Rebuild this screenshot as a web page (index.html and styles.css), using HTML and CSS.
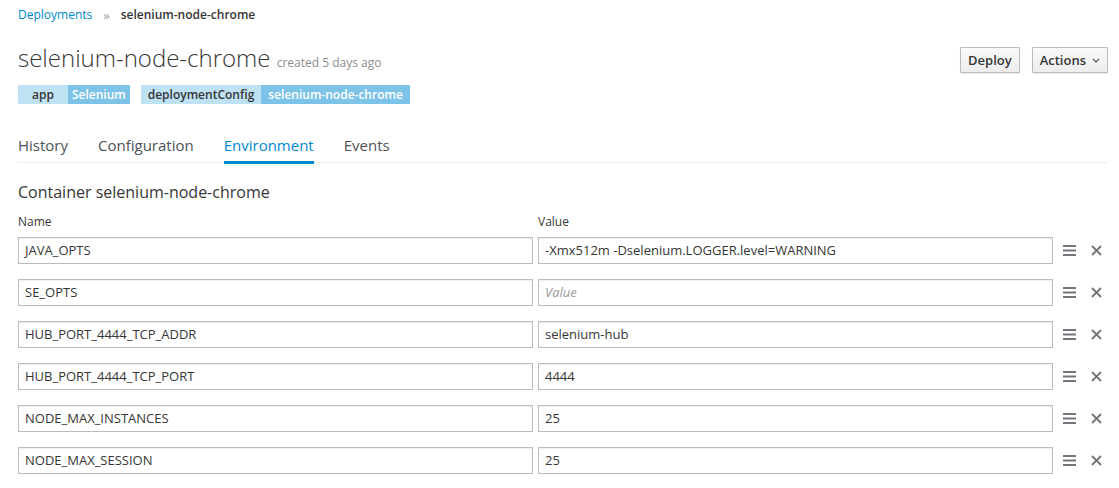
FILE: index.html
```html
<!DOCTYPE html>
<html>
<head>
<meta charset="utf-8">
<link rel="stylesheet" href="styles.css">
</head>
<body>
<div class="page">
  <div class="breadcrumb">
    <a class="crumb-link">Deployments</a>
    <span class="crumb-sep">»</span>
    <span class="crumb-current">selenium-node-chrome</span>
  </div>
  <div class="header">
    <div class="header-main">
      <h1 class="title">selenium-node-chrome <small class="created">created 5 days ago</small></h1>
      <div class="labels">
        <span class="label label-app"><span class="lkey">app</span><span class="lval">Selenium</span></span>
        <span class="label label-dc"><span class="lkey">deploymentConfig</span><span class="lval">selenium-node-chrome</span></span>
      </div>
    </div>
    <div class="actions">
      <button class="btn">Deploy</button>
      <button class="btn">Actions <svg class="caret" width="8" height="5" viewBox="0 0 8 5"><path d="M1 1 L4 4 L7 1" fill="none" stroke="#4d5258" stroke-width="1.1"/></svg></button>
    </div>
  </div>
  <div class="tabs">
    <span class="tab">History</span>
    <span class="tab">Configuration</span>
    <span class="tab active">Environment</span>
    <span class="tab">Events</span>
  </div>
  <h3 class="container-title">Container selenium-node-chrome</h3>
  <div class="env">
    <div class="env-head">
      <span class="col">Name</span>
      <span class="col">Value</span>
      <span class="icons-spacer"></span>
    </div>
    <div class="env-row">
      <div class="field">JAVA_OPTS</div>
      <div class="field">-Xmx512m -Dselenium.LOGGER.level=WARNING</div>
      <div class="row-icons">
        <svg class="ham" width="13" height="11" viewBox="0 0 13 11"><rect y="0" width="13" height="2" fill="#72767b"/><rect y="4.5" width="13" height="2" fill="#72767b"/><rect y="9" width="13" height="2" fill="#72767b"/></svg>
        <svg class="x" width="11" height="11" viewBox="0 0 11 11"><path d="M1 1 L10 10 M10 1 L1 10" stroke="#72767b" stroke-width="1.8"/></svg>
      </div>
    </div>
    <div class="env-row">
      <div class="field">SE_OPTS</div>
      <div class="field placeholder">Value</div>
      <div class="row-icons">
        <svg class="ham" width="13" height="11" viewBox="0 0 13 11"><rect y="0" width="13" height="2" fill="#72767b"/><rect y="4.5" width="13" height="2" fill="#72767b"/><rect y="9" width="13" height="2" fill="#72767b"/></svg>
        <svg class="x" width="11" height="11" viewBox="0 0 11 11"><path d="M1 1 L10 10 M10 1 L1 10" stroke="#72767b" stroke-width="1.8"/></svg>
      </div>
    </div>
    <div class="env-row">
      <div class="field">HUB_PORT_4444_TCP_ADDR</div>
      <div class="field">selenium-hub</div>
      <div class="row-icons">
        <svg class="ham" width="13" height="11" viewBox="0 0 13 11"><rect y="0" width="13" height="2" fill="#72767b"/><rect y="4.5" width="13" height="2" fill="#72767b"/><rect y="9" width="13" height="2" fill="#72767b"/></svg>
        <svg class="x" width="11" height="11" viewBox="0 0 11 11"><path d="M1 1 L10 10 M10 1 L1 10" stroke="#72767b" stroke-width="1.8"/></svg>
      </div>
    </div>
    <div class="env-row">
      <div class="field">HUB_PORT_4444_TCP_PORT</div>
      <div class="field">4444</div>
      <div class="row-icons">
        <svg class="ham" width="13" height="11" viewBox="0 0 13 11"><rect y="0" width="13" height="2" fill="#72767b"/><rect y="4.5" width="13" height="2" fill="#72767b"/><rect y="9" width="13" height="2" fill="#72767b"/></svg>
        <svg class="x" width="11" height="11" viewBox="0 0 11 11"><path d="M1 1 L10 10 M10 1 L1 10" stroke="#72767b" stroke-width="1.8"/></svg>
      </div>
    </div>
    <div class="env-row">
      <div class="field">NODE_MAX_INSTANCES</div>
      <div class="field">25</div>
      <div class="row-icons">
        <svg class="ham" width="13" height="11" viewBox="0 0 13 11"><rect y="0" width="13" height="2" fill="#72767b"/><rect y="4.5" width="13" height="2" fill="#72767b"/><rect y="9" width="13" height="2" fill="#72767b"/></svg>
        <svg class="x" width="11" height="11" viewBox="0 0 11 11"><path d="M1 1 L10 10 M10 1 L1 10" stroke="#72767b" stroke-width="1.8"/></svg>
      </div>
    </div>
    <div class="env-row">
      <div class="field">NODE_MAX_SESSION</div>
      <div class="field">25</div>
      <div class="row-icons">
        <svg class="ham" width="13" height="11" viewBox="0 0 13 11"><rect y="0" width="13" height="2" fill="#72767b"/><rect y="4.5" width="13" height="2" fill="#72767b"/><rect y="9" width="13" height="2" fill="#72767b"/></svg>
        <svg class="x" width="11" height="11" viewBox="0 0 11 11"><path d="M1 1 L10 10 M10 1 L1 10" stroke="#72767b" stroke-width="1.8"/></svg>
      </div>
    </div>
  </div>
</div>
</body>
</html>
```
FILE: styles.css
```css
* { box-sizing: border-box; }
html, body { margin: 0; padding: 0; background: #fff; }
body {
  font-family: "Open Sans", "Noto Sans", sans-serif;
  font-size: 12px;
  color: #363636;
}
.page { padding: 0 11px 0 18px; }
.breadcrumb {
  height: 28px;
  padding-top: 1px;
  font-size: 12px;
  display: flex;
  align-items: center;
}
.crumb-link { color: #0088ce; }
.crumb-sep { color: #9c9c9c; margin: 0 11px; font-size: 13px; }
.crumb-current { font-weight: 600; color: #363636; }
.header {
  display: flex;
  justify-content: space-between;
  align-items: flex-start;
  margin-top: 14px;
}
.title {
  margin: 0;
  font-size: 24px;
  font-weight: 300;
  line-height: 32px;
  color: #363636;
}
.created { font-size: 12px; color: #8b8d8f; font-weight: 400; }
.labels { display: flex; gap: 11px; margin-top: 6px; }
.label { display: flex; font-size: 12px; font-weight: 600; line-height: 19px; border-radius: 1px; overflow: hidden; }
.lkey { background: #bee1f4; color: #363636; padding: 0 7px; }
.lval { background: #7dc3e8; color: #fff; padding: 0 7px; }
.label-app .lkey { padding: 0 14px; }
.label-app .lval { padding: 0 4px; }
.actions { display: flex; gap: 12px; margin-top: 5px; }
.btn {
  font-family: inherit;
  font-size: 13px;
  font-weight: 600;
  color: #363636;
  background: linear-gradient(#fafafa, #ededed);
  border: 1px solid #bbb;
  border-radius: 1px;
  box-shadow: 0 1px 1px rgba(3,3,3,0.08);
  height: 26px;
  padding: 0 7px;
  display: flex;
  align-items: center;
  gap: 6px;
}
.caret { margin-top: 1px; }
.tabs {
  display: flex;
  margin-top: 23px;
  border-bottom: 1px solid #ededed;
  height: 36px;
}
.tab {
  font-size: 15px;
  line-height: 20px;
  color: #4d5258;
  margin-right: 30px;
  padding-top: 8px;
  height: 36px;
}
.tab.active {
  color: #0088ce;
  border-bottom: 3px solid #0088ce;
  height: 37px;
  margin-bottom: -1px;
}
.container-title {
  margin: 18px 0 0 0;
  font-size: 16px;
  font-weight: 400;
  line-height: 22px;
  color: #363636;
}
.env { margin-top: 10px; }
.env-head, .env-row {
  display: grid;
  grid-template-columns: 515px 515px 56px;
  column-gap: 5px;
}
.env-head { font-size: 12px; line-height: 17px; margin-bottom: 7px; }
.env-row { margin-bottom: 15px; align-items: center; }
.field {
  height: 27px;
  border: 1px solid #bbb;
  padding: 0 6px;
  font-size: 13px;
  line-height: 25px;
  color: #363636;
  box-shadow: inset 0 1px 1px rgba(3,3,3,0.075);
  white-space: nowrap;
  overflow: hidden;
}
.field.placeholder { color: #999; font-style: italic; }
.row-icons { display: flex; align-items: center; padding-left: 5px; gap: 15px; }
```
